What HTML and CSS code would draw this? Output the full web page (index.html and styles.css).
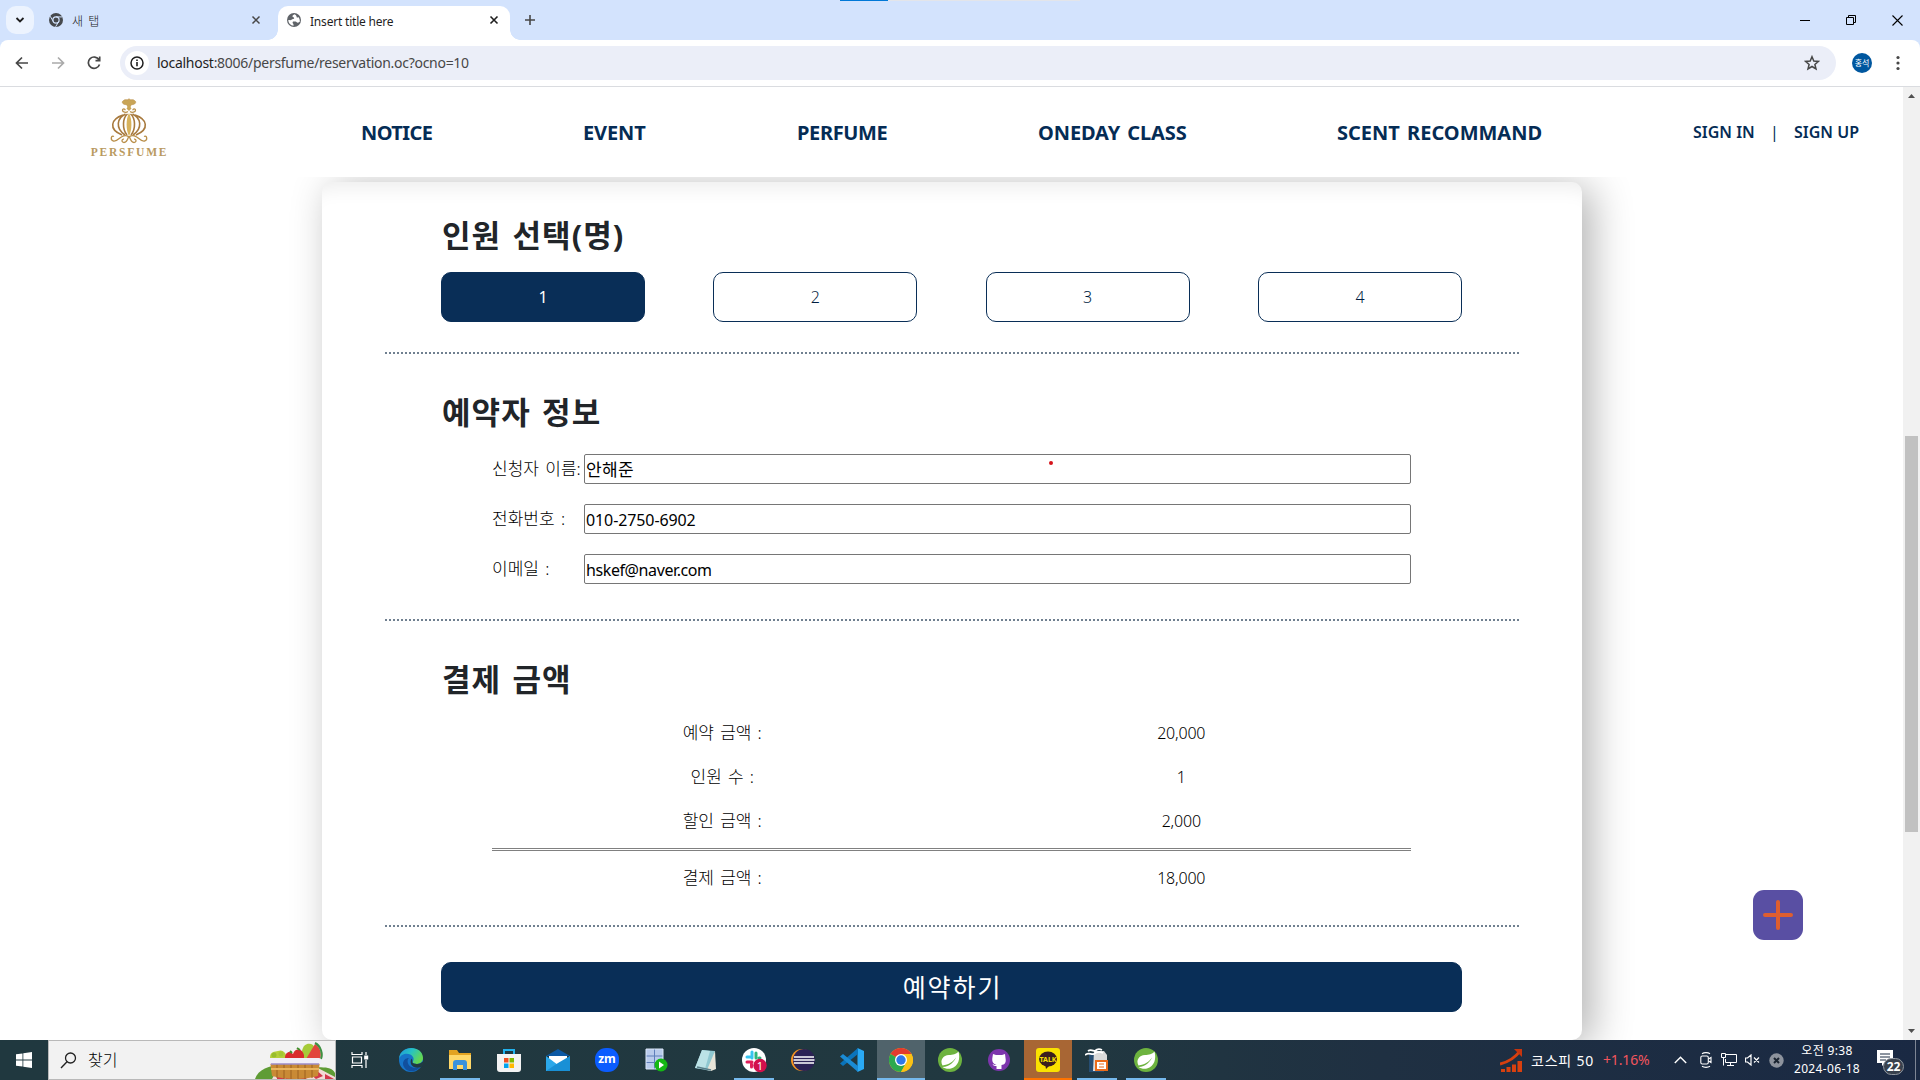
FILE: index.html
```html
<!DOCTYPE html>
<html lang="ko">
<head>
<meta charset="utf-8">
<title>Insert title here</title>
<link rel="stylesheet" href="styles.css">
</head>
<body>
<div class="screen">
  <div class="tabs">
    <div class="loadbar"><i></i></div>
    <div class="tabdrop"><svg width="10" height="10" viewBox="0 0 10 10"><path d="M1.500 3l3.500 3.500L8.500 3" fill="none" stroke="#1f1f1f" stroke-width="1.800"/></svg></div>
    <div class="tab idle">
      <svg class="fav" width="14" height="14" viewBox="0 0 14 14"><circle cx="7" cy="7" r="7" fill="#46494d"/><circle cx="7" cy="7" r="3.100" fill="#46494d" stroke="#d3e3fd" stroke-width="1.200"/><path d="M7 3.900h6.300M4.300 8.500L1.200 3.200M9.700 8.500L6.600 13.800" stroke="#d3e3fd" stroke-width="1"/></svg>
      <span class="t-new">새 탭</span>
      <svg class="x" width="10" height="10" viewBox="0 0 10 10"><path d="M1.500 1.500l7 7m0-7l-7 7" stroke="#474747" stroke-width="1.500"/></svg>
    </div>
    <div class="tab active">
      <svg class="fav" width="14" height="14" viewBox="0 0 14 14"><circle cx="7" cy="7" r="7" fill="#5f6368"/><path d="M7.500 1.300c-1 .7-2.300 1-2 2.300.2 1 1.600.5 1.700 1.700.1 1-1.900.6-2.700 1.500C3.700 7.700 2 6.900 1.300 7c0 3 2.300 5.500 5.200 5.700.2-1-.1-2.100-1-2.700l.5-1.600 2.500.1c1 .3 1.500 1 2.200 1.200.8.300 1.300-.6 2-.6.4-2.400-.3-3.800-1.400-5.200-.5 1-1.600.9-1.700-.2-.1-.9-.9-1.900-2.100-2.400z" fill="#fff"/></svg>
      <span class="t-ins">Insert title here</span>
      <svg class="x" width="10" height="10" viewBox="0 0 10 10"><path d="M1.500 1.500l7 7m0-7l-7 7" stroke="#1f1f1f" stroke-width="1.600"/></svg>
    </div>
    <svg class="plus" width="12" height="12" viewBox="0 0 12 12"><path d="M6 1v10M1 6h10" stroke="#474747" stroke-width="1.600"/></svg>
    <div class="winbtns">
      <svg width="11" height="11"><path d="M0 5.500h10" stroke="#000"/></svg>
      <svg width="11" height="11"><path d="M.5 2.500h7v7h-7zM2.500 2.500v-2h7v7h-2" fill="none" stroke="#000"/></svg>
      <svg width="11" height="11"><path d="M.5.5l10 10m0-10l-10 10" stroke="#000" stroke-width="1.100"/></svg>
    </div>
  </div>
  <div class="toolbar-bg"><div class="toolbar">
    <svg class="nav" width="14" height="14" viewBox="0 0 14 14"><path d="M13 7H2M7 1.500L1.500 7 7 12.500" fill="none" stroke="#474747" stroke-width="1.700"/></svg>
    <svg class="nav" width="14" height="14" viewBox="0 0 14 14"><path d="M1 7h11M7 1.500L12.500 7 7 12.500" fill="none" stroke="#aaa" stroke-width="1.700"/></svg>
    <svg class="nav" width="14" height="14" viewBox="0 0 14 14"><path d="M12 3.800A5.700 5.700 0 1 0 12.500 8.500M12.700.5v4.200H8.500" fill="none" stroke="#474747" stroke-width="1.700"/></svg>
    <div class="omni">
      <div class="info"><svg width="14" height="14" viewBox="0 0 14 14"><circle cx="7" cy="7" r="6" fill="none" stroke="#1f1f1f" stroke-width="1.500"/><path d="M7 6v4.200M7 3.500v1.500" stroke="#1f1f1f" stroke-width="1.600"/></svg></div>
      <span class="url"><b>localhost</b>:8006/persfume/reservation.oc?ocno=10</span>
      <svg class="star" width="16" height="16" viewBox="0 0 16 16"><path d="M8 1.700l1.800 4.300 4.600.4-3.500 3 1.100 4.600L8 11.500 4 14l1.100-4.600-3.500-3 4.600-.4z" fill="none" stroke="#474747" stroke-width="1.500"/></svg>
    </div>
    <div class="avatar">홍석</div>
    <svg class="menu" width="4" height="16" viewBox="0 0 4 16"><g fill="#474747"><circle cx="2" cy="2.500" r="1.600"/><circle cx="2" cy="8" r="1.600"/><circle cx="2" cy="13.500" r="1.600"/></g></svg>
  </div></div>
  <div class="viewport">
    <div class="page">
      <header>
        <div class="logo">
          <svg width="38" height="46" viewBox="0 0 38 46" fill="none" stroke="#b98f4a" stroke-width="1.300">
            <path d="M19 7l-4-.5c-3-.5-3.500-3-1.500-4C15 .5 17 3 19 .8c2 2.200 4-.3 5.500 1.700 2 1 1.500 3.500-1.500 4z" fill="#c9a557" stroke-width=".6"/>
            <path d="M16 6h6l-1.500 3 1 1.500L19 13l-2.500-2.500 1-1.500z" fill="#c9a557" stroke="none"/>
            <path d="M18 13.500c-2 1.500-5.500.8-5.500-1.300 0-1.800 2.700-1.600 2.600 0M20 13.500c2 1.500 5.500.8 5.500-1.300 0-1.800-2.700-1.600-2.600 0"/>
            <path d="M19 15c-3.200 6-3.200 17 0 23 3.200-6 3.200-17 0-23z" fill="#d7b25c" stroke="none"/>
            <path d="M17.500 16c-5 4-5.500 15-.5 21M15.500 16C7 20 5 30 15 37M13 17C1 21-2 31 12 37M20.500 16c5 4 5.500 15 .5 21M22.500 16C31 20 33 30 23 37M25 17C37 21 40 31 26 37" stroke="#a87a3e" stroke-width="1.600"/>
            <path d="M4 38.500c-3-1.500-4 3.500-.5 4.500 4 .8 6-4 9.500-5 2-.5 4-.5 6 1 2-1.500 4-1.500 6-1 3.500 1 5.500 5.800 9.500 5 3.500-1 2.500-6-.5-4.500M18.500 39c-1 3-2 5.500-4.500 5.500-2.800 0-2.500-4 0-3.300M19.500 39c1 3 2 5.500 4.500 5.500 2.800 0 2.500-4 0-3.300"/>
          </svg>
          <span>PERSFUME</span>
        </div>
        <nav><a class="n1">NOTICE</a><a class="n2">EVENT</a><a class="n3">PERFUME</a><a class="n4">ONEDAY CLASS</a><a class="n5">SCENT RECOMMAND</a></nav>
        <div class="sign"><a class="in">SIGN IN</a><span class="bar">|</span><a class="up">SIGN UP</a></div>
      </header>
      <main>
        <section class="card">
          <div class="block people">
            <h2>인원 선택(명)</h2>
            <div class="choices"><button class="on">1</button><button>2</button><button>3</button><button>4</button></div>
          </div>
          <div class="block who">
            <h2>예약자 정보</h2>
            <div class="form">
              <div class="field"><label>신청자 이름:</label><div class="input"><span class="v1">안해준</span><i class="dot"></i></div></div>
              <div class="field"><label>전화번호 :</label><div class="input"><span class="v2">010-2750-6902</span></div></div>
              <div class="field"><label>이메일 :</label><div class="input"><span class="v3">hskef@naver.com</span></div></div>
            </div>
          </div>
          <div class="block pay">
            <h2>결제 금액</h2>
            <div class="sum">
              <div class="row"><span class="k">예약 금액 :</span><span class="n">20,000</span></div>
              <div class="row"><span class="k">인원 수 :</span><span class="n">1</span></div>
              <div class="row"><span class="k">할인 금액 :</span><span class="n">2,000</span></div>
              <div class="rule"></div>
              <div class="row total"><span class="k">결제 금액 :</span><span class="n">18,000</span></div>
            </div>
          </div>
          <button class="submit">예약하기</button>
        </section>
      </main>
      <div class="fab"><svg width="50" height="50"><path d="M25 12v26M12 25h26" stroke="#de5e2f" stroke-width="4" stroke-linecap="round"/></svg></div>
    </div>
    <div class="scroll">
      <svg width="7" height="4"><path d="M0 4L3.500 0 7 4z" fill="#505050"/></svg>
      <div class="track"><div class="thumb"></div></div>
      <svg width="7" height="4"><path d="M0 0h7L3.500 4z" fill="#505050"/></svg>
    </div>
  </div>
  <footer class="taskbar">
    <div class="start"><svg width="16" height="16"><path d="M0 2.300l6.500-.9v6.200H0zM7.300 1.300L16 0v7.600H7.300zM0 8.400h6.500v6.200L0 13.700zM7.300 8.400H16V16l-8.700-1.200z" fill="#fff"/></svg></div>
    <div class="search">
      <svg width="17" height="17" viewBox="0 0 17 17"><circle cx="10.500" cy="6" r="5" fill="none" stroke="#222" stroke-width="1.300"/><path d="M7 9.800L1 16" stroke="#222" stroke-width="1.400"/></svg>
      <span>찾기</span>
      <svg class="picnic" width="80" height="38" viewBox="0 0 80 38">
        <path d="M0 38C4 26 20 22 40 25s36-2 40 7v6z" fill="#5f9c35"/><path d="M17 38l6-11h40l17 9v2z" fill="#f3d9d6"/><path d="M22 29l8 9h-8zM34 32l6 6H30zM44 32l8 6h-9zM60 28l8 7-7 3-7-6zM70 33l9 5h-9z" fill="#d3374a"/>
        <path d="M15 17c0-7 5-6 8-7 4-2 8 1 9 7z" fill="#b5cf3a"/><circle cx="19" cy="14" r="2.500" fill="#98bd2e"/><circle cx="26" cy="13" r="2.500" fill="#a5c832"/><path d="M47 10c1-7 7-9 11-6l4 7-5 8H48z" fill="#a6cb38"/>
        <path d="M30 17c0-6 5-8 8-4 2-6 9-6 11 1v4H30z" fill="#d92b2b"/><path d="M35 10l2 2M42 7l3 2" stroke="#3f8f2c" stroke-width="2"/><path d="M60 3c5 3 7 9 5 15H51z" fill="#e2463d"/><path d="M60 2c6 3 8 11 6 16" fill="none" stroke="#3e9142" stroke-width="2"/>
        <path d="M15 20h50l-2 15c-14 4-32 4-46 0z" fill="#c98a35"/><path d="M22 23v14M29 23v15M36 23v15M43 23v15M50 23v15M57 23v14" stroke="#9c6020" stroke-width="1"/><path d="M16 28h48" stroke="#e8b45e" stroke-width="2"/><rect x="14" y="17" width="52" height="6" rx="2" fill="#f1eff8"/><path d="M16 23h48" stroke="#9c8cc7" stroke-width="1.500"/>
      </svg>
    </div>
    <div class="apps">
      <div class="app view"><svg width="18" height="18" viewBox="0 0 18 18" fill="none" stroke="#fff" stroke-width="1.200"><path d="M1 1v2.500h10V1M1 17v-2.500h10V17M1.500 6h9v6h-9zM15 1v3m0 5v8"/><path d="M13.800 5h2.800v3h-2.800z" fill="#fff"/></svg></div>
      <div class="app"><svg width="24" height="24" viewBox="0 0 24 24"><defs><linearGradient id="edge" x1="0" y1="0" x2="1" y2=".5"><stop stop-color="#1f93dd"/><stop offset=".5" stop-color="#26c2c4"/><stop offset="1" stop-color="#65d850"/></linearGradient></defs><circle cx="12" cy="12" r="12" fill="#1674c8"/><path d="M0 11C1-4 24-3 24 10c0 5-5 7-9 5.500-3-1 1-3-1-6.500C11 4 2 5 0 11z" fill="url(#edge)"/><path d="M9 11c-2 6 4 11 12 8-5 7-16 5-17-3 0-4 3-6 6-6z" fill="#114f9d"/><path d="M12.500 10.500c2 2.500-.5 4 2.500 5 3 1 6 .5 9-2v4l-2.500 1.700c-7 2-12-3-9-8.700z" fill="#203a43"/></svg></div>
      <div class="app run"><svg width="24" height="20" viewBox="0 0 24 20"><path d="M1 0h8l2 3h12v16H1z" fill="#e3a321"/><path d="M1 5h22v14H1z" fill="#ffd869"/><path d="M5 20v-7c0-2 1-3 3-3h8c2 0 3 1 3 3v7h-4v-5H9v5z" fill="#3a92dc"/></svg></div>
      <div class="app"><svg width="24" height="24" viewBox="0 0 24 24"><path d="M7 7V2h10v5" fill="none" stroke="#22b2ee" stroke-width="2"/><path d="M0 6h24v15c0 2-1 3-3 3H3c-2 0-3-1-3-3z" fill="#f3f3f3"/><path d="M7 10h4.500v4.500H7z" fill="#ef5022"/><path d="M12.500 10H17v4.500h-4.500z" fill="#7fba00"/><path d="M7 15.500h4.500V20H7z" fill="#00a4ef"/><path d="M12.500 15.500H17V20h-4.500z" fill="#ffb900"/></svg></div>
      <div class="app"><svg width="24" height="22" viewBox="0 0 24 22"><path d="M0 7l12-7 12 7z" fill="#0c59a4"/><path d="M3 7h18v8H3z" fill="#fff"/><path d="M0 7l12 9L24 7v15H0z" fill="#2ba8ea"/><path d="M0 22l12-8 12-7v15z" fill="#1990d6"/></svg></div>
      <div class="app"><div class="zoomapp">zm</div></div>
      <div class="app"><svg width="24" height="24" viewBox="0 0 24 24"><path d="M2 1h17v20H2z" fill="#b9cbec"/><path d="M2 8h17M2 14.500h17M10.500 1v20" stroke="#5f7fbb"/><path d="M2 1h17v20H2z" fill="none" stroke="#dce7fa"/><circle cx="17" cy="17" r="6.500" fill="#14b814"/><path d="M15 13.500l5 3.500-5 3.500z" fill="#fff"/></svg></div>
      <div class="app"><svg width="24" height="24" viewBox="0 0 24 24"><path d="M9 2l13 1-4 20-16-3z" fill="#8fc7d0"/><path d="M9 2l8 1-5 18-10-1z" fill="#bce2e6"/><path d="M22 3l1 18-5 2-4-1z" fill="#e8e4d8"/><path d="M4 19l14 3" stroke="#597d88" stroke-width="1.500"/></svg></div>
      <div class="app run"><svg width="26" height="28" viewBox="-1 -2 26 28"><circle cx="12" cy="12" r="12" fill="#fff"/><g stroke-width="3" stroke-linecap="round"><path d="M10 4v6M5 9h3" stroke="#36c5f0"/><path d="M14 5v5M17 10h1" stroke="#2eb67d"/><path d="M5 14h5M9.500 16v3" stroke="#e01e5a"/></g><circle cx="18" cy="17.500" r="6.700" fill="#d2104c"/><text x="18" y="21.500" class="badge1">1</text></svg></div>
      <div class="app"><svg width="24" height="22" viewBox="0 0 24 22"><circle cx="11" cy="11" r="11" fill="#f79421"/><circle cx="13" cy="11" r="11" fill="#2c2255"/><path d="M3 8h20M2.500 11h21M3 14h20" stroke="#fff" stroke-width="1.500"/></svg></div>
      <div class="app"><svg width="24" height="24" viewBox="0 0 24 24"><path d="M17.500 0L24 3v18l-6.500 3z" fill="#2aa9f4"/><path d="M18 0v6L3 18l-3-2.500z" fill="#0a73ba"/><path d="M18 24v-6L3 6 0 8.500z" fill="#1a8bd4"/></svg></div>
      <div class="app current"><svg width="24" height="24" viewBox="0 0 24 24"><circle cx="12" cy="12" r="12" fill="#fbc116"/><path d="M12 12L1.600 6A12 12 0 0 1 22.400 6z" fill="#e33b2e"/><path d="M12 12L1.600 6A12 12 0 0 0 12 24l5-9z" fill="#2da94f"/><path d="M12 6h10.400A12 12 0 0 1 12 24l5.200-9z" fill="#fbc116"/><circle cx="12" cy="12" r="6" fill="#fff"/><circle cx="12" cy="12" r="4.700" fill="#2f78ea"/></svg></div>
      <div class="app"><svg width="24" height="24" viewBox="0 0 24 24"><circle cx="12" cy="12" r="12" fill="#6db33f"/><path d="M20.500 3.500c2 7 0 15-7.500 17-3 .7-6.500 0-8.500-1.500C12 18.500 16 14 18 9.500 15 14 11 16.500 4.500 17.500 1.500 12 5 7.500 11 7c4-.3 7-.5 9.500-3.500z" fill="#fff"/></svg></div>
      <div class="app"><svg width="22" height="22" viewBox="0 0 22 22"><circle cx="11" cy="11" r="11" fill="#7d35ad"/><path d="M5 5l3 1h6l3-1 .5 4c1 5-1 6.500-4 7v4h-5v-3c-2 0-3 0-4-2 2 1 2 1 4 1-3-1-5-3-4-8z" fill="#fff"/></svg></div>
      <div class="app kakao"><svg width="24" height="24" viewBox="0 0 24 24"><rect width="24" height="24" rx="3" fill="#fae100"/><ellipse cx="12" cy="11" rx="9" ry="7.500" fill="#3b1e1e"/><path d="M9 16l1 5 4-4z" fill="#3b1e1e"/><text x="12" y="13.500" class="talk">TALK</text></svg></div>
      <div class="app run"><svg width="24" height="24" viewBox="0 0 24 24"><path d="M4 5h10l5 4v15H4z" fill="#264d72"/><path d="M9 3h10l3 4v16H8z" fill="#dadada"/><path d="M0 7C4 4 6 7 9 6c3-3 7-2 9-1M3 3c3-2 5 0 7 0 2-2 5-2 7-1" fill="none" stroke="#fff" stroke-width="1.800"/><path d="M11 13h11v9H11z" fill="#fff" stroke="#ea6b1a" stroke-width="2"/><path d="M14 16h5m-5 3h5" stroke="#ea6b1a"/></svg></div>
      <div class="app run"><svg width="24" height="24" viewBox="0 0 24 24"><circle cx="12" cy="12" r="12" fill="#6db33f"/><path d="M20.500 3.500c2 7 0 15-7.500 17-3 .7-6.500 0-8.500-1.500C12 18.500 16 14 18 9.500 15 14 11 16.500 4.500 17.500 1.500 12 5 7.500 11 7c4-.3 7-.5 9.500-3.500z" fill="#fff"/></svg></div>
    </div>
    <div class="tray">
      <svg class="stock" width="23" height="23" viewBox="0 0 23 23"><path d="M0 15C8 13 15 9 20 2" fill="none" stroke="#d8400f" stroke-width="3"/><path d="M14 0h8v8z" fill="#c7350e"/><path d="M1 20h4v3H1zM6.500 18h4v5h-4zM12 15.500h4V23h-4zM17.500 12H22v11h-4.500z" fill="#d8400f"/></svg>
      <span class="kospi">코스피 50</span><span class="pct">+1.16%</span>
      <svg class="chev" width="13" height="8"><path d="M.8 7L6.500 1.200 12.200 7" fill="none" stroke="#fff" stroke-width="1.400"/></svg>
      <svg class="meet" width="12" height="16" viewBox="0 0 12 16" fill="none" stroke="#fff" stroke-width="1.100"><rect x=".8" y="4" width="7.500" height="8" rx="1.500"/><path d="M8.500 7l2.500-1.500v5L8.500 9M2 1.700c2-1.400 6-1.400 8 0M2 14.300c2 1.400 6 1.400 8 0"/></svg>
      <svg class="net" width="16" height="14" viewBox="0 0 16 14" fill="none" stroke="#fff"><path d="M5 1.500h10.500v8H4.500V6M9.500 9.500v3M6 12.500h7M.5.500h4v4h-4zM2.500 4.500v8"/></svg>
      <svg class="vol" width="15" height="12" viewBox="0 0 15 12" fill="none" stroke="#fff" stroke-width="1.200"><path d="M.5 4h2L6 1v10L2.500 8h-2zM9 3.500l5 5m0-5l-5 5"/></svg>
      <svg class="xbadge" width="15" height="15" viewBox="0 0 15 15"><circle cx="7.500" cy="7.500" r="7.200" fill="#8d939d"/><path d="M5 5l5 5m0-5l-5 5" stroke="#1a2430" stroke-width="2"/></svg>
      <div class="clock"><span class="tm">오전 9:38</span><span class="dt">2024-06-18</span></div>
      <div class="note"><svg width="16" height="16"><path d="M0 0h16v13H8l-3 3v-3H0z" fill="#fff"/><path d="M3 4h10M3 7h10M3 10h6" stroke="#1b2a41"/></svg><b>22</b></div>
      <div class="peek"></div>
    </div>
  </footer>
</div>
</body>
</html>
```
FILE: styles.css
```css
*{box-sizing:border-box}
body{margin:0;overflow:hidden;font-family:"Noto Sans","Noto Sans CJK KR",sans-serif}
svg{display:block;flex:none}
span,a,label,h2{white-space:nowrap}
.screen{width:1920px;height:1080px;display:flex;flex-direction:column;background:#fff}
/* browser tabs */
.tabs{height:40px;background:#d3e3fd;display:flex;align-items:center;position:relative}
.loadbar{position:absolute;left:840px;top:0;width:240px;height:1px;background:#e3e5ea}
.loadbar i{display:block;width:48px;height:1px;background:#0078d7}
.tabdrop{width:28px;height:28px;margin-left:6px;border-radius:10px;background:#ecf3fe;display:flex;align-items:center;justify-content:center}
.tab{display:flex;align-items:center;font-size:12px}
.idle{width:244px;height:40px;padding:0 17px 0 15px;color:#222}
.active{width:232px;height:34px;margin-top:6px;background:#fff;border-radius:10px 10px 0 0;padding:0 11px 6px 9px;color:#1f1f1f;position:relative}
.active:before,.active:after{content:"";position:absolute;bottom:0;width:10px;height:10px}
.active:before{left:-10px;background:radial-gradient(circle at 0 0,transparent 9.500px,#fff 10px)}
.active:after{right:-10px;background:radial-gradient(circle at 100% 0,transparent 9.500px,#fff 10px)}
.tab span{margin-left:9px;line-height:16px;padding-top:3px;font-weight:300}
.tab .x{margin-left:auto}
.tab .t-new{letter-spacing:1px}
.tab .t-ins{letter-spacing:-.2px;font-weight:400}
.plus{margin-left:14px}
.winbtns{margin-left:auto;margin-right:17px;display:flex;gap:35px}
.toolbar-bg{background:#d3e3fd}
.toolbar{height:47px;background:#fff;border-radius:8px 8px 0 0;border-bottom:1px solid #dadce0;display:flex;align-items:center;padding:0 20px 1px 15px}
.nav{margin-right:22px}
.omni{width:1716px;height:34px;background:#ebeef8;border-radius:17px;display:flex;align-items:center;padding:0 16px 0 5px;margin-left:-3px}
.info{width:24px;height:24px;border-radius:12px;background:#fff;display:flex;align-items:center;justify-content:center}
.url{font-size:14px;color:#474747;margin-left:8px;letter-spacing:-.280px}
.url b{font-weight:400;color:#1f1f1f}
.star{margin-left:auto}
.avatar{width:20px;height:20px;border-radius:10px;background:#00579f;color:#fff;font-size:8px;line-height:19px;text-align:center;margin-left:16px}
.menu{margin-left:auto;margin-right:0}
/* page */
.viewport{height:953px;display:flex}
.page{width:1903px;height:953px;position:relative;overflow:hidden;background:#fff}
header{height:90px;display:flex;position:relative;z-index:2;background:#fff;padding-left:90px}
.logo{width:77px;padding-top:11px;display:flex;flex-direction:column;align-items:center}
.logo span{font:600 11.500px/14px "Liberation Serif",serif;color:#b99a5f;letter-spacing:1.800px;margin:1px -2px 0 0}
nav{display:flex;margin-left:194px;gap:150px;height:90px;align-items:center;font-size:20px;font-weight:700;color:#052c55;padding-top:1px}
nav a{display:block;word-spacing:2px}
.n1{width:72px;letter-spacing:-.6px}.n2{width:64px;letter-spacing:-.1px}.n3{width:91px;letter-spacing:-.35px}.n4{width:149px;letter-spacing:-.1px}.n5{width:206px;letter-spacing:0}
.sign{display:flex;align-items:center;margin-left:150px;font-size:16px;font-weight:600;color:#052c55}
.sign .bar{width:39px;text-align:center;font-weight:400}
.sign .in{width:62px}.sign .up{width:67px}
main{padding:5px 0 0 322px}
.card{width:1260px;height:858px;border-radius:10px;background:#fff;box-shadow:10px 5px 40px rgba(0,0,0,.3),inset 0 25px 20px -20px rgba(0,0,0,.08);display:flex;flex-direction:column;align-items:center}
.block{width:1134px;border-bottom:2px dotted #708090;padding:0 57px 0 56px}
.people{height:172px}.who{height:267px}.pay{height:306px}
h2{margin:0;font-size:31px;font-weight:700;color:#212529;line-height:42px;height:42px;letter-spacing:1.100px;word-spacing:2px;padding-left:1px}
.people h2{margin-top:32px}.who h2{margin-top:37px}.pay h2{margin-top:37px}
.choices{display:flex;justify-content:space-between;margin-top:16px}
button{font:300 16px/24px "Noto Sans","Noto Sans CJK KR",sans-serif;color:#001c40;border:1px solid #092e57;border-radius:10px;background:#fff;height:50px;width:204px;padding:0}
button.on,.submit{background:#092e57;color:#fff}
button.on{font-weight:400}
.form{padding:21px 51px 0 51px;display:flex;flex-direction:column;gap:20px}
.field{display:flex;height:30px;align-items:center;color:#000;font-size:16px}
label{width:92px;font-size:17px;line-height:24px;letter-spacing:0;word-spacing:2px;font-weight:300}
.input{flex:1;height:30px;border:1px solid #767676;border-radius:2px;display:flex;align-items:center;padding-left:1px;color:#000;position:relative}
.v1{font-size:17px;line-height:24px;letter-spacing:.3px;padding-top:2px}.v2{letter-spacing:-.1px;padding-top:1px}.v3{letter-spacing:-.4px;padding-top:1px}
.dot{position:absolute;left:464px;top:6px;width:4px;height:4px;border-radius:2px;background:#d5131b}
.sum{margin:11px 51px 0 51px;font-size:16px;color:#000}
.row{display:grid;grid-template-columns:1fr 1fr;height:44px;text-align:center;align-items:center;font-weight:300}
.rule{height:3px;border-top:1px solid #808080;border-bottom:1px solid #808080;margin-top:5px}
.total{height:54px}
.k{font-size:17px;line-height:24px;letter-spacing:-.1px;word-spacing:2px;padding-left:1px}
.n{letter-spacing:-.2px}
.submit{width:1021px;margin-top:35px;margin-right:1px;font-size:25px;font-weight:400;letter-spacing:1.900px;padding-left:2px}
.fab{position:absolute;left:1753px;top:803px;width:50px;height:50px;border-radius:11px;background:#594fa3}
.scroll{width:17px;background:#f1f1f1;display:flex;flex-direction:column;align-items:center;padding:7px 0}
.track{flex:1;width:13px;padding-top:338px}
.thumb{height:396px;background:#c1c1c1}
/* taskbar */
.taskbar{height:40px;background:linear-gradient(90deg,#20383f,#213840 55%,#1f3042 72%,#1a2943);display:flex;color:#fff}
.start{width:48px;display:flex;align-items:center;justify-content:center}
.search{width:288px;background:#f2f2f2;border:1px solid #b9b9b9;display:flex;align-items:center;padding-left:11px}
.search span{font-size:16px;color:#000;margin-left:11px;padding-bottom:3px;font-weight:300}
.picnic{margin-left:auto}
.apps{display:flex;gap:1px}
.app{width:48px;height:40px;display:flex;align-items:center;justify-content:center;position:relative}
.view{width:50px;padding-right:2px}
.run:after,.current:after,.kakao:after{content:"";position:absolute;left:4px;right:4px;bottom:0;height:2px;background:#76b9ed}
.current{background:#50636b}.current:after{left:0;right:0}
.kakao{background:#a86634}.kakao:after{left:0;right:0;background:#ff7300}
.zoomapp{width:24px;height:24px;border-radius:11px;background:#0b5cff;font-weight:700;font-size:12px;line-height:22px;text-align:center}
.badge1{font:11px "Noto Sans",sans-serif;fill:#fff;text-anchor:middle}
.talk{font:700 7px "Noto Sans",sans-serif;fill:#fae100;text-anchor:middle}
.tray{margin-left:auto;display:flex;align-items:center;width:420px;font-size:14px}
.kospi{margin-left:8px;width:72px;letter-spacing:.8px}.pct{color:#f3555e;width:54px;letter-spacing:-.15px}
.kospi,.pct{padding-bottom:1px}
.chev{margin-left:17px}.meet{margin-left:13px}.net{margin-left:9px}.vol{margin-left:8px}.xbadge{margin-left:9px}
.clock{width:74px;margin-left:6px;display:flex;flex-direction:column;align-items:center;font-size:12px;line-height:18px;letter-spacing:.35px}
.note{width:28px;height:28px;margin-left:13px;padding-top:4px;position:relative}
.note b{position:absolute;left:6px;top:12px;width:21px;height:17px;border:1px solid #91979f;border-radius:9px;background:#38414d;font-size:12px;line-height:15px;text-align:center}
.peek{width:1px;height:40px;background:#7d8594;margin-left:auto;margin-right:4px}
```
